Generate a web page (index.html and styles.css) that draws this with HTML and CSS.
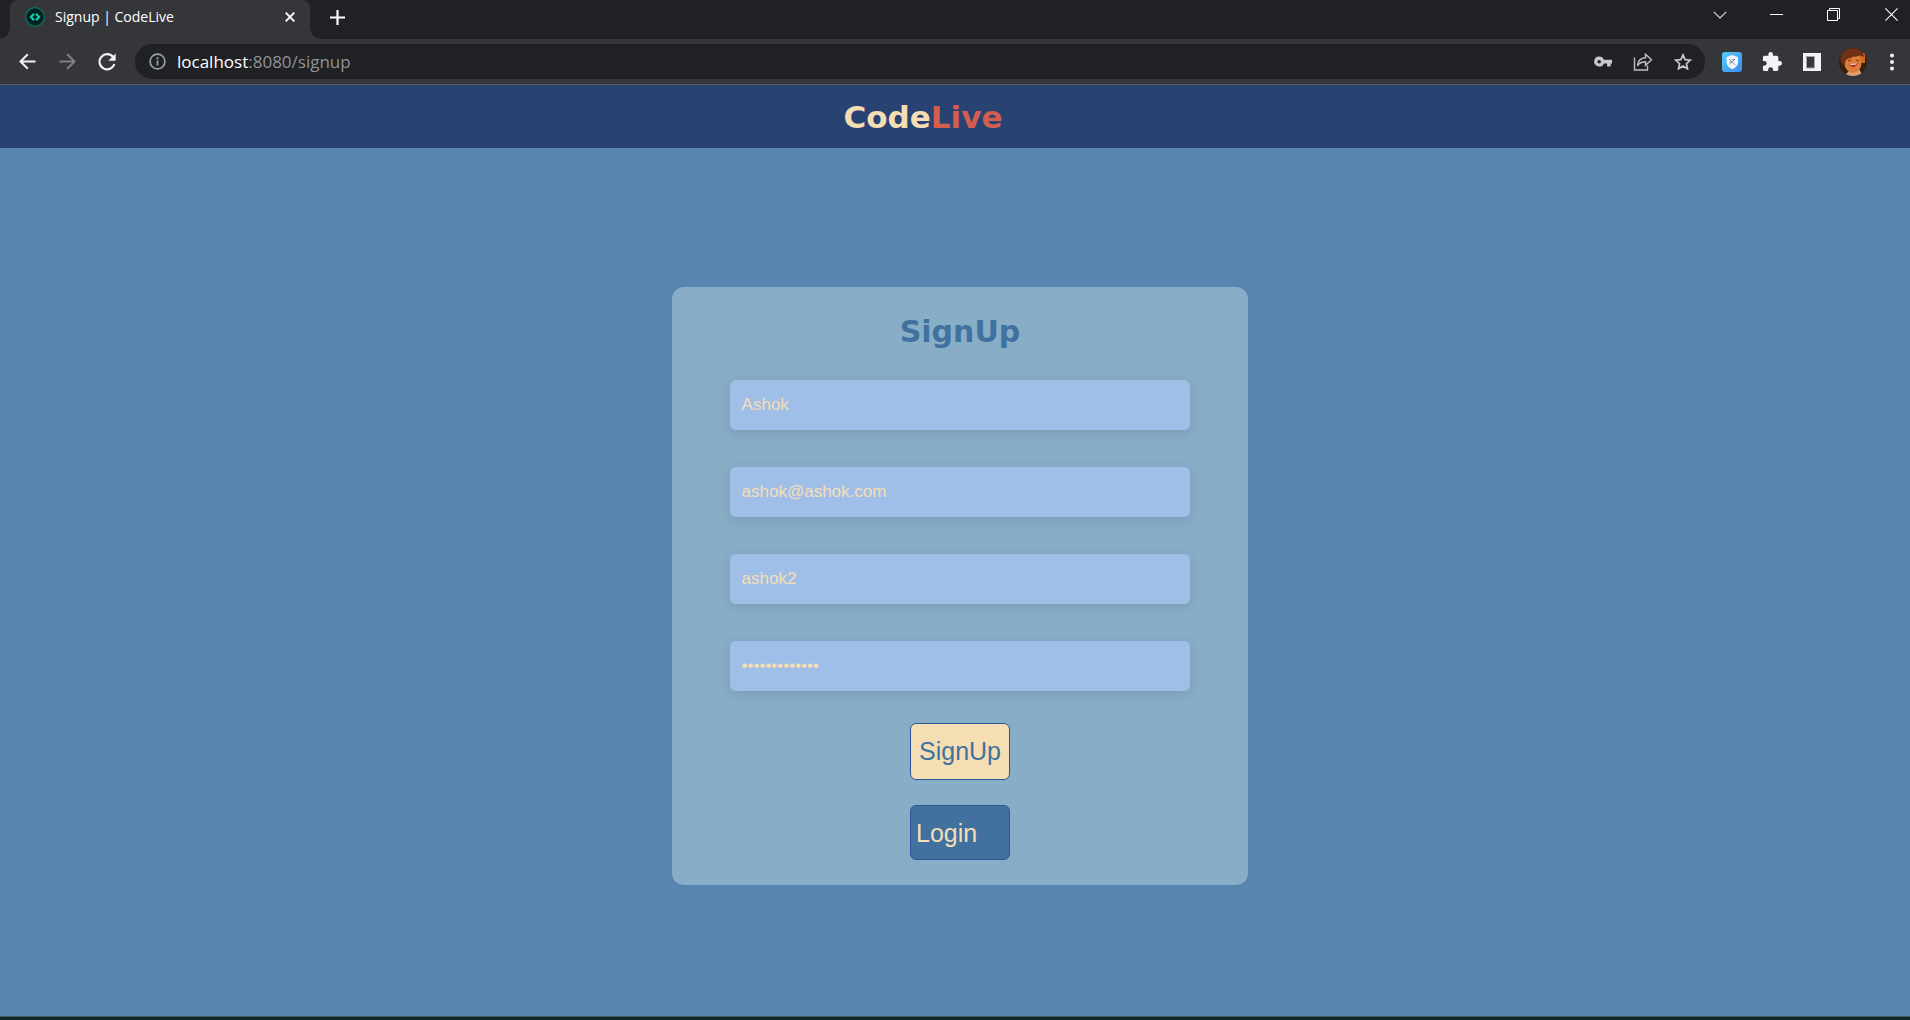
FILE: index.html
```html
<!DOCTYPE html>
<html lang="en">
<head>
<meta charset="utf-8">
<title>Signup | CodeLive</title>
<link rel="stylesheet" href="styles.css">
</head>
<body>
<div class="browser">
  <div class="tab-strip">
    <div class="tab">
      <svg class="favicon" width="20" height="20" viewBox="0 0 20 20"><circle cx="10" cy="10" r="9.3" fill="#02211f" stroke="#0b7467" stroke-width="1.3"/><path d="M9 6.800 6 10l3 3.200M11 6.800 14 10l-3 3.200" fill="none" stroke="#08d3ae" stroke-width="2.200"/></svg>
      <span class="tab-title">Signup | CodeLive</span>
      <button class="icon-button tab-close" aria-label="Close tab"><svg width="10" height="10" viewBox="0 0 10 10"><path d="M.7.7l8.6 8.6M9.3.7.7 9.3" stroke="#fff" stroke-width="1.9"/></svg></button>
    </div>
    <button class="icon-button new-tab" aria-label="New tab"><svg width="15" height="15" viewBox="0 0 15 15"><path d="M7.5 0v15M0 7.5h15" stroke="#fff" stroke-width="2.2"/></svg></button>
    <div class="window-buttons">
      <button class="icon-button window-button" aria-label="Search tabs"><svg width="14" height="8" viewBox="0 0 14 8"><path d="M.7.8 7 7 13.3.8" fill="none" stroke="#ddd" stroke-width="1.1"/></svg></button>
      <button class="icon-button window-button" aria-label="Minimize"><svg width="13" height="1" viewBox="0 0 13 1"><path d="M0 .5h13" stroke="#fff"/></svg></button>
      <button class="icon-button window-button" aria-label="Restore"><svg width="13" height="13" viewBox="0 0 13 13"><path d="M.5 2.5h10v10H.5zM2.5 2.5v-2h10v10h-2" fill="none" stroke="#fff"/></svg></button>
      <button class="icon-button window-close" aria-label="Close window"><svg width="13" height="13" viewBox="0 0 13 13"><path d="M.4.4l12.2 12.2M12.6.4.4 12.6" stroke="#fff" stroke-width="1.1"/></svg></button>
    </div>
  </div>
  <div class="toolbar">
    <button class="icon-button tool-button" aria-label="Back"><svg width="17" height="17" viewBox="0 0 17 17"><path d="M16.5 8.5H2M8.8 1.2 1.5 8.5l7.3 7.3" fill="none" stroke="#f1f3f4" stroke-width="2"/></svg></button>
    <button class="icon-button tool-button" aria-label="Forward"><svg width="17" height="17" viewBox="0 0 17 17"><path d="M.5 8.5H15M8.2 1.2l7.3 7.3-7.3 7.3" fill="none" stroke="#7f8183" stroke-width="2"/></svg></button>
    <button class="icon-button tool-button" aria-label="Reload"><svg width="18" height="18" viewBox="0 0 18 18"><path d="M15.3 4.3A7.6 7.6 0 1 0 16.4 11" fill="none" stroke="#f1f3f4" stroke-width="2.1"/><path d="M17.6.5v7.3h-7.3z" fill="#f1f3f4"/></svg></button>
    <div class="omnibox">
      <button class="icon-button site-info" aria-label="Site information"><svg width="17" height="17" viewBox="0 0 17 17"><circle cx="8.5" cy="8.5" r="7.4" fill="none" stroke="#9aa0a6" stroke-width="1.7"/><path d="M8.5 7.5v5M8.5 4.2v2" stroke="#9aa0a6" stroke-width="1.8"/></svg></button>
      <div class="address" role="textbox" aria-label="Address" contenteditable="true" spellcheck="false"><span class="host">localhost</span>:8080/signup</div>
      <button class="icon-button tool-button" aria-label="Passwords"><svg width="18" height="12" viewBox="0 0 18 12"><path fill-rule="evenodd" fill="#c8c9ca" d="M5.200 .500a5 5 0 0 1 4.600 3.200H18v3.700h-1.300V10.500h-3.600V7.400H9.800A5 5 0 1 1 5.200 .500zm0 3.400a1.800 1.800 0 1 0 0 3.600 1.800 1.800 0 0 0 0-3.600z"/></svg></button>
      <button class="icon-button tool-button" aria-label="Share"><svg width="20" height="18" viewBox="0 0 20 18"><path d="M1.500 4.500v12.500h13V12.500M4.500 12.800C5 7.500 8 5 12.500 4.800V1.200l6 5.600-6 5.500V8.700c-3.500 0-6 .9-8 4.100z" fill="none" stroke="#bdbebf" stroke-width="1.400"/></svg></button>
      <button class="icon-button tool-button" aria-label="Bookmark"><svg width="18" height="17" viewBox="0 0 18 17"><path d="M9 1.900l2.100 4.800 5.200.5-3.900 3.500 1.100 5.100L9 13.100l-4.500 2.700 1.100-5.100L1.700 7.200l5.200-.5z" fill="none" stroke="#c8c9ca" stroke-width="1.700"/></svg></button>
    </div>
    <button class="icon-button tool-button" aria-label="Shield extension"><svg width="20" height="20" viewBox="0 0 20 20"><defs><linearGradient id="sky" x2="1" y2="1"><stop stop-color="#54cbfa"/><stop offset="1" stop-color="#3c8df2"/></linearGradient></defs><rect width="20" height="20" rx="3" fill="url(#sky)"/><path d="M10.200 3 16 5v5.500c0 3-2.600 5.200-5.800 6.800-3.200-1.600-5.600-3.800-5.600-6.800V5z" fill="#f2f6fb"/><path d="M7 7l6.500 6M12.800 7.500l-5.500 5M7.500 10h3M10 7.500h3" stroke="#67809b" stroke-width=".8"/></svg></button>
    <button class="icon-button tool-button" aria-label="Extensions"><svg width="20" height="20" viewBox="1 1 22 22"><path fill="#f1f3f4" d="M20.500 11H19V7c0-1.100-.9-2-2-2h-4V3.500a2.500 2.500 0 0 0-5 0V5H4c-1.100 0-2 .9-2 2v3.800h1.500a2.700 2.700 0 0 1 0 5.400H2V20c0 1.100.9 2 2 2h3.800v-1.500a2.700 2.700 0 0 1 5.400 0V22H17c1.100 0 2-.9 2-2v-4h1.500a2.500 2.500 0 0 0 0-5z"/></svg></button>
    <button class="icon-button tool-button" aria-label="Side panel"><svg width="18" height="18" viewBox="0 0 18 18"><path fill="#f1f3f4" fill-rule="evenodd" d="M0 0h18v18H0zM3 3v12h8V3z"/><path d="M3.500 3.500h8v11.500h-8z" fill="none" stroke="#a5a7a9"/></svg></button>
    <button class="icon-button profile" aria-label="Profile"><svg width="28" height="28" viewBox="0 0 28 28"><defs><clipPath id="round"><circle cx="14" cy="14" r="14"/></clipPath></defs><g clip-path="url(#round)"><path d="M0 0h28v28H0z" fill="#35200f"/><path d="M20 5h6v10h-6z" fill="#d9681d"/><path d="M5 28l6-6 5 2 4-3 4 7z" fill="#dca26f"/><ellipse cx="14" cy="15" rx="8.500" ry="10" fill="#dd7d3a"/><path d="M2 14C0 5 6 1 13 0c7 0 12 4 12 9-3-2-6-2-8 0-2-1-4 0-5 1-2 0-4 1-5 2-1 3-2 5-2 7z" fill="#6f3018"/><path d="M9 13l3-1M17 12l3 1" stroke="#74351a" stroke-width="1.200"/><path d="M10 16c3-1 6-1 9-1-1 4-7 6-9 1z" fill="#b52a22"/><path d="M11 15.800l7-.6-.6 1.300-5.800.4z" fill="#fae9dc"/></g></svg></button>
    <button class="icon-button menu" aria-label="Menu"><svg width="4" height="18" viewBox="0 0 4 18"><g fill="#f1f3f4"><circle cx="2" cy="2.500" r="2"/><circle cx="2" cy="9" r="2"/><circle cx="2" cy="15.500" r="2"/></g></svg></button>
  </div>
</div>
<header class="site-header">
  <div class="brand">Code<span class="brand-accent">Live</span></div>
</header>
<main class="page">
  <form class="card">
    <h1 class="card-title">SignUp</h1>
    <div class="fields">
      <input class="field" type="text" aria-label="Name" value="Ashok">
      <input class="field" type="email" aria-label="Email" value="ashok@ashok.com">
      <input class="field" type="text" aria-label="Username" value="ashok2">
      <input class="field" type="password" aria-label="Password" value="ashokpassword">
    </div>
    <div class="actions">
      <button class="signup" type="submit">SignUp</button>
      <a class="login" href="#login">Login</a>
    </div>
  </form>
</main>
<div class="desktop-edge"></div>
</body>
</html>
```
FILE: styles.css
```css
* { box-sizing: border-box; }

body {
  margin: 0;
  min-height: 100vh;
  display: flex;
  flex-direction: column;
  background: #5885af;
  font-family: "Liberation Sans", Arial, sans-serif;
}

/* Browser window */
.browser {
  font-family: "Open Sans", "Noto Sans", sans-serif;
  background: #35363a;
  border-bottom: 1px solid #5b5c5f;
}

.icon-button {
  display: flex;
  align-items: center;
  justify-content: center;
  flex: none;
  padding: 0;
  border: 0;
  background: none;
}

.icon-button svg { display: block; }

.tab-strip {
  display: flex;
  height: 39px;
  padding-left: 10px;
  background: #202124;
}

.tab {
  position: relative;
  display: flex;
  align-items: center;
  width: 300px;
  padding: 0 10px 5px 15px;
  background: #35363a;
  border-radius: 8px 8px 0 0;
}

.tab::before,
.tab::after {
  content: "";
  position: absolute;
  bottom: 0;
  width: 10px;
  height: 10px;
}

.tab::before {
  right: 100%;
  background: radial-gradient(circle at 0 0, transparent 9px, #35363a 10px);
}

.tab::after {
  left: 100%;
  background: radial-gradient(circle at 100% 0, transparent 9px, #35363a 10px);
}

.tab-title {
  flex: 1;
  padding-left: 10px;
  color: #fff;
  font-size: 14px;
  line-height: 20px;
}

.tab-close { width: 20px; height: 20px; }

.new-tab { width: 54px; height: 34px; }

.window-buttons {
  display: flex;
  height: 29px;
  margin-left: auto;
}

.window-button { width: 57px; }

.window-close { width: 48px; padding-left: 10px; }

.toolbar {
  display: flex;
  align-items: center;
  height: 45px;
  padding-left: 7px;
}

.tool-button { width: 40px; height: 36px; }

.profile { width: 42px; }

.menu { width: 36px; }

.omnibox {
  display: flex;
  align-items: center;
  flex: 1;
  height: 35px;
  margin: 0 7px 0 8px;
  padding: 0 2px 0 9px;
  border-radius: 18px;
  background: #202124;
}

.site-info { width: 27px; }

.address {
  flex: 1;
  padding-left: 6px;
  color: #8f9296;
  font-size: 17px;
  line-height: 24px;
  white-space: nowrap;
  outline: 0;
}

.host { color: #fff; }

/* Page */
.site-header {
  display: flex;
  justify-content: center;
  padding: 14px 64px 13px 0;
  background: #284371;
}

.brand {
  color: #f5deb3;
  font: bold 31px/36px "DejaVu Sans", Verdana, sans-serif;
}

.brand-accent { color: #d25d50; }

.page {
  flex: 1;
  display: flex;
  align-items: center;
  justify-content: center;
  padding: 8px 0 0 10px;
}

.card {
  display: flex;
  flex-direction: column;
  align-items: center;
  width: 100%;
  max-width: 576px;
  padding: 27px 0 25px;
  border-radius: 12px;
  background: #88adc7;
}

.card-title {
  margin: 0 0 30px;
  color: #41729f;
  font: bold 30px/36px "DejaVu Sans", Verdana, sans-serif;
}

.fields {
  display: flex;
  flex-direction: column;
  gap: 37px;
  width: 80%;
}

.field {
  width: 100%;
  height: 50px;
  padding: 0 12px;
  border: 0;
  border-radius: 6px;
  background: #9fbfe9;
  box-shadow: 0 3px 12px rgba(0, 0, 0, 0.1);
  color: #f5deb3;
  font: 17px "Liberation Sans", Arial, sans-serif;
  outline: 0;
}

.actions {
  display: flex;
  flex-direction: column;
  gap: 25px;
  width: 100px;
  margin-top: 32px;
}

.signup,
.login {
  border: 1px solid #29559b;
  border-radius: 6px;
  font: 25px/29px "Liberation Sans", Arial, sans-serif;
}

.signup {
  height: 57px;
  padding: 0;
  background: #f5deb3;
  color: #41729f;
}

.login {
  padding: 13px 5px 11px;
  background: #41729f;
  color: #f5deb3;
  text-decoration: none;
}

.desktop-edge {
  height: 4px;
  border-top: 1px solid #48595c;
  background: #10282c;
}
```
